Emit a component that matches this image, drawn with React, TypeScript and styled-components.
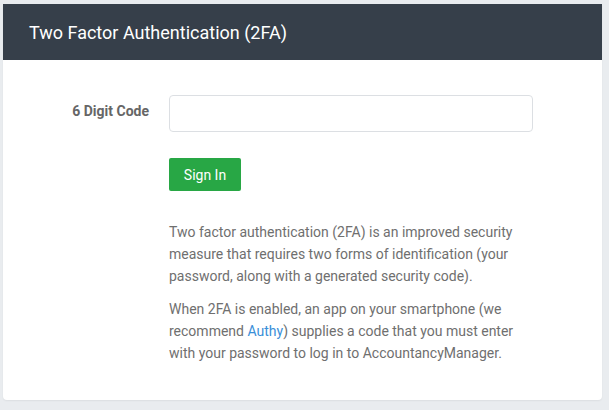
import styled, { createGlobalStyle } from "styled-components";

const Global = createGlobalStyle`
  html, body {
    margin: 0;
    background: #e9ecef;
    font-family: Roboto, "Liberation Sans", sans-serif;
  }
`;

const Page = styled.div`
  padding: 4px 7px 9px 3px;
`;

const Card = styled.div`
  background: #fff;
  border-radius: 0 0 4px 4px;
  box-shadow: 0 1px 2px rgba(0, 0, 0, 0.06);
  overflow: hidden;
`;

const Header = styled.div`
  background: #363f4a;
  color: #fff;
  height: 56px;
  display: flex;
  align-items: center;
  padding-left: 26px;
  font-size: 18px;
`;

const Body = styled.div`
  display: grid;
  grid-template-columns: 146px 364px;
  column-gap: 20px;
  row-gap: 26px;
  padding: 35px 0 25px 0;
`;

const Label = styled.label`
  text-align: right;
  font-weight: bold;
  font-size: 14px;
  color: #666;
  padding-top: 8px;
`;

const Input = styled.input`
  box-sizing: border-box;
  width: 100%;
  height: 37px;
  border: 1px solid #dcdfe3;
  border-radius: 4px;
  outline: none;
`;

const Button = styled.button`
  background: #28a745;
  color: #fff;
  border: none;
  border-radius: 2px;
  height: 33px;
  width: 72px;
  font-family: Roboto, sans-serif;
  font-size: 14px;
  cursor: pointer;
`;

const Col = styled.div<{ $top?: number }>`
  grid-column: 2;
  margin-top: ${(p) => p.$top ?? 0}px;
`;

const Text = styled.p`
  margin: 0 0 11px;
  font-size: 14px;
  line-height: 22px;
  color: #6f6f6f;
`;

const Link = styled.a`
  color: #3a8fd8;
  text-decoration: none;
`;

export default function App() {
  return (
    <>
      <Global />
      <Page>
        <Card>
          <Header>Two Factor Authentication (2FA)</Header>
          <Body>
            <Label>6 Digit Code</Label>
            <Input />
            <Col>
              <Button>Sign In</Button>
            </Col>
            <Col $top={4}>
              <Text>
                Two factor authentication (2FA) is an improved security measure that requires two
                forms of identification (your password, along with a generated security code).
              </Text>
              <Text>
                When 2FA is enabled, an app on your smartphone (we recommend <Link href="#">Authy</Link>)
                supplies a code that you must enter with your password to log in to
                AccountancyManager.
              </Text>
            </Col>
          </Body>
        </Card>
      </Page>
    </>
  );
}
